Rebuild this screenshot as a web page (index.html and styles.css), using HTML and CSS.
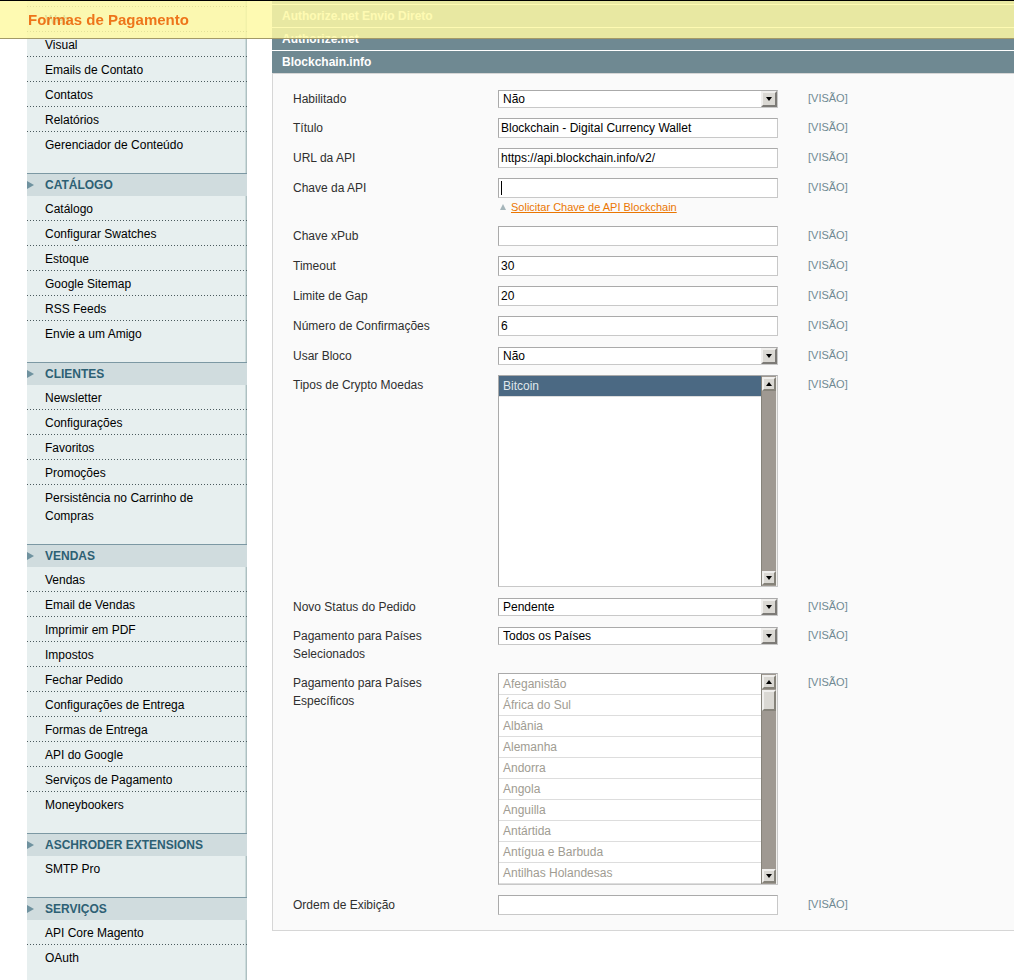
FILE: index.html
```
<!DOCTYPE html>
<html lang="pt-BR">
<head>
    <meta charset="UTF-8">
    <meta name="viewport" content="width=device-width, initial-scale=1.0">
    <title>Formas de Pagamento</title>
    <link rel="stylesheet" href="styles.css">
</head>
<body>

    <header class="floating-header">
        <h1>Formas de Pagamento</h1>
    </header>

    <div class="columns">
        <nav class="side-nav">
            <ul>
                <li><a href="#">Web</a></li>
                <li><a href="#">Visual</a></li>
                <li><a href="#">Emails de Contato</a></li>
                <li><a href="#">Contatos</a></li>
                <li><a href="#">Relatórios</a></li>
                <li><a href="#">Gerenciador de Conteúdo</a></li>
            </ul>
            <h2>Catálogo</h2>
            <ul>
                <li><a href="#">Catálogo</a></li>
                <li><a href="#">Configurar Swatches</a></li>
                <li><a href="#">Estoque</a></li>
                <li><a href="#">Google Sitemap</a></li>
                <li><a href="#">RSS Feeds</a></li>
                <li><a href="#">Envie a um Amigo</a></li>
            </ul>
            <h2>Clientes</h2>
            <ul>
                <li><a href="#">Newsletter</a></li>
                <li><a href="#">Configurações</a></li>
                <li><a href="#">Favoritos</a></li>
                <li><a href="#">Promoções</a></li>
                <li><a href="#">Persistência no Carrinho de Compras</a></li>
            </ul>
            <h2>Vendas</h2>
            <ul>
                <li><a href="#">Vendas</a></li>
                <li><a href="#">Email de Vendas</a></li>
                <li><a href="#">Imprimir em PDF</a></li>
                <li><a href="#">Impostos</a></li>
                <li><a href="#">Fechar Pedido</a></li>
                <li><a href="#">Configurações de Entrega</a></li>
                <li><a href="#">Formas de Entrega</a></li>
                <li><a href="#">API do Google</a></li>
                <li><a href="#">Serviços de Pagamento</a></li>
                <li><a href="#">Moneybookers</a></li>
            </ul>
            <h2>Aschroder Extensions</h2>
            <ul>
                <li><a href="#">SMTP Pro</a></li>
            </ul>
            <h2>Serviços</h2>
            <ul>
                <li><a href="#">API Core Magento</a></li>
                <li><a href="#">OAuth</a></li>
            </ul>
        </nav>

        <main class="main-col">
            <a class="section-head" href="#">Authorize.net Envio Direto</a>
            <a class="section-head" href="#">Authorize.net</a>
            <a class="section-head" href="#">Blockchain.info</a>

            <form class="fieldset">
                <div class="row">
                    <label for="active">Habilitado</label>
                    <div class="value select-box">
                        <select id="active"><option>Não</option><option>Sim</option></select>
                        <span class="drop"><i class="down"></i></span>
                    </div>
                    <span class="scope">[VISÃO]</span>
                </div>
                <div class="row">
                    <label for="title">Título</label>
                    <div class="value"><input type="text" id="title" value="Blockchain - Digital Currency Wallet"></div>
                    <span class="scope">[VISÃO]</span>
                </div>
                <div class="row">
                    <label for="api_url">URL da API</label>
                    <div class="value"><input type="text" id="api_url" value="https://api.blockchain.info/v2/"></div>
                    <span class="scope">[VISÃO]</span>
                </div>
                <div class="row">
                    <label for="api_key">Chave da API</label>
                    <div class="value">
                        <input type="text" id="api_key">
                        <span class="cursor"></span>
                        <p class="note"><i class="up"></i><a href="#">Solicitar Chave de API Blockchain</a></p>
                    </div>
                    <span class="scope">[VISÃO]</span>
                </div>
                <div class="row">
                    <label for="xpub">Chave xPub</label>
                    <div class="value"><input type="text" id="xpub"></div>
                    <span class="scope">[VISÃO]</span>
                </div>
                <div class="row">
                    <label for="timeout">Timeout</label>
                    <div class="value"><input type="text" id="timeout" value="30"></div>
                    <span class="scope">[VISÃO]</span>
                </div>
                <div class="row">
                    <label for="gap">Limite de Gap</label>
                    <div class="value"><input type="text" id="gap" value="20"></div>
                    <span class="scope">[VISÃO]</span>
                </div>
                <div class="row">
                    <label for="confirmations">Número de Confirmações</label>
                    <div class="value"><input type="text" id="confirmations" value="6"></div>
                    <span class="scope">[VISÃO]</span>
                </div>
                <div class="row">
                    <label for="block">Usar Bloco</label>
                    <div class="value select-box">
                        <select id="block"><option>Não</option><option>Sim</option></select>
                        <span class="drop"><i class="down"></i></span>
                    </div>
                    <span class="scope">[VISÃO]</span>
                </div>
                <div class="row">
                    <label for="types">Tipos de Crypto Moedas</label>
                    <div class="value">
                        <div class="list-box">
                            <select id="types" multiple size="10"><option selected>Bitcoin</option></select>
                            <div class="scrollbar">
                                <span class="arrow"><i class="up"></i></span>
                                <span class="arrow"><i class="down"></i></span>
                            </div>
                        </div>
                    </div>
                    <span class="scope">[VISÃO]</span>
                </div>
                <div class="row">
                    <label for="status">Novo Status do Pedido</label>
                    <div class="value select-box">
                        <select id="status"><option>Pendente</option></select>
                        <span class="drop"><i class="down"></i></span>
                    </div>
                    <span class="scope">[VISÃO]</span>
                </div>
                <div class="row">
                    <label for="allow">Pagamento para Países Selecionados</label>
                    <div class="value select-box">
                        <select id="allow"><option>Todos os Países</option><option>Países Específicos</option></select>
                        <span class="drop"><i class="down"></i></span>
                    </div>
                    <span class="scope">[VISÃO]</span>
                </div>
                <div class="row">
                    <label for="countries">Pagamento para Países Específicos</label>
                    <div class="value">
                        <div class="list-box">
                            <select id="countries" multiple size="10" disabled>
                                <option>Afeganistão</option>
                                <option>África do Sul</option>
                                <option>Albânia</option>
                                <option>Alemanha</option>
                                <option>Andorra</option>
                                <option>Angola</option>
                                <option>Anguilla</option>
                                <option>Antártida</option>
                                <option>Antígua e Barbuda</option>
                                <option>Antilhas Holandesas</option>
                            </select>
                            <div class="scrollbar">
                                <span class="arrow"><i class="up"></i></span>
                                <span class="thumb"></span>
                                <span class="arrow"><i class="down"></i></span>
                            </div>
                        </div>
                    </div>
                    <span class="scope">[VISÃO]</span>
                </div>
                <div class="row">
                    <label for="sort">Ordem de Exibição</label>
                    <div class="value"><input type="text" id="sort"></div>
                    <span class="scope">[VISÃO]</span>
                </div>
            </form>
        </main>
    </div>

</body>
</html>
```
FILE: styles.css
```
* {
    box-sizing: border-box;
}

body {
    margin: 0;
    background: #fff;
    color: #2f2f2f;
    font-family: "Liberation Sans", Arial, Helvetica, sans-serif;
    font-size: 12px;
    line-height: 18px;
}

/* Floating title bar */
.floating-header {
    position: fixed;
    top: 0;
    left: 0;
    right: 0;
    z-index: 10;
    padding: 10px 28px 9px;
    border-top: 1px solid #000;
    border-bottom: 1px solid #a39a68;
    background: rgba(254, 249, 164, 0.85);
}

.floating-header h1 {
    margin: 0;
    color: #eb5e00;
    font-size: 15px;
    line-height: 18px;
    opacity: 0.85;
}

.columns {
    display: flex;
    min-height: 100vh;
    padding-left: 27px;
    gap: 25px;
}

/* Left menu */
.side-nav {
    flex: 0 0 220px;
    padding-top: 6px;
    background: linear-gradient(to left, #aebfc1 1px, #cbdbdb 1px, #cbdbdb 2px, #e7efef 2px);
}

.side-nav ul {
    margin: 0;
    padding: 0 0 17px;
    list-style: none;
}

.side-nav ul:first-child {
    padding-top: 1px;
    background: repeating-linear-gradient(to right, #4b5a5e 0 1px, transparent 1px 3px) top / 100% 1px no-repeat;
}

.side-nav li {
    padding-bottom: 1px;
    background: repeating-linear-gradient(to right, #4b5a5e 0 1px, transparent 1px 3px) bottom / 100% 1px no-repeat;
}

.side-nav li:last-child {
    padding-bottom: 0;
    background: none;
}

.side-nav li a {
    display: block;
    padding: 4px 32px 2px 18px;
    color: #000;
    text-decoration: none;
}

.side-nav h2 {
    display: flex;
    align-items: center;
    gap: 11px;
    margin: 0;
    padding: 2px 0;
    border-top: 1px solid #7c98a3;
    background: #d0dcde;
    color: #2d6074;
    font-size: 12px;
    line-height: 18px;
    text-transform: uppercase;
}

.side-nav h2::before {
    content: "";
    border-left: 7px solid #6f929f;
    border-top: 4px solid transparent;
    border-bottom: 4px solid transparent;
}

/* Payment sections */
.main-col {
    flex: 1;
    min-width: 0;
    padding-top: 4px;
    background: linear-gradient(#6f8992 4px, transparent 4px);
}

.section-head {
    display: block;
    padding: 2px 10px;
    border-top: 1px solid #fff;
    background: #6f8992;
    color: #fff;
    font-weight: bold;
    text-decoration: none;
}

.fieldset {
    padding: 10px 0 10px 20px;
    border: 1px solid #d6d6d6;
    border-right: 0;
    background: #fafafa;
}

.row {
    display: grid;
    grid-template-columns: 175px 280px 1fr;
    column-gap: 30px;
    align-items: start;
}

.row label {
    padding: 6px 0 5px;
}

.value {
    position: relative;
    padding: 5px 0;
}

.scope {
    padding-top: 5px;
    color: #6f8992;
    font-size: 11px;
}

input,
select {
    display: block;
    width: 100%;
    margin: 0;
    border: 1px solid #aaa;
    border-right-color: #c8c8c8;
    border-bottom-color: #c8c8c8;
    border-radius: 0;
    background: #fff;
    color: #000;
    font: inherit;
}

input {
    height: 20px;
    padding: 0 2px;
}

.select-box {
    padding-top: 6px;
}

.select-box select {
    height: 18px;
    padding: 0 20px 0 4px;
    line-height: 16px;
    appearance: none;
}

.drop {
    position: absolute;
    top: 7px;
    right: 1px;
    display: flex;
    align-items: center;
    justify-content: center;
    width: 16px;
    height: 16px;
    border: 2px solid;
    border-color: #f0efed #7c7a76 #7c7a76 #f0efed;
    background: #dad8d3;
    pointer-events: none;
}

.down {
    border: 3px solid transparent;
    border-top: 4px solid #000;
    border-bottom: 0;
}

.up {
    border: 3px solid transparent;
    border-bottom: 4px solid #000;
    border-top: 0;
}

.cursor {
    position: absolute;
    top: 8px;
    left: 3px;
    width: 1px;
    height: 14px;
    background: #000;
}

.note {
    display: flex;
    align-items: center;
    gap: 5px;
    margin: 0;
    padding-left: 2px;
    font-size: 11px;
}

.note a {
    color: #ea7601;
}

.note .up {
    border-bottom: 6px solid #a5b5ba;
}

/* Multiple choice lists */
.list-box {
    display: flex;
    height: 212px;
    border: 1px solid #aaa;
    border-right-color: #c8c8c8;
    border-bottom-color: #c8c8c8;
    background: #fff;
}

.list-box select {
    flex: 1;
    min-width: 0;
    height: 210px;
    padding: 0;
    border: 0;
    overflow: hidden;
    scrollbar-width: none;
}

.list-box option {
    height: 21px;
    min-height: 21px;
    padding: 3px 4px 0;
    border-bottom: 1px solid #ddd;
}

.list-box option:checked {
    background: linear-gradient(#4b6983, #4b6983);
    -webkit-text-fill-color: #dfe6ec;
}

.list-box select:disabled {
    opacity: 1;
}

.list-box select:disabled option {
    color: #a09c92;
    -webkit-text-fill-color: #a09c92;
}

.scrollbar {
    display: flex;
    flex-direction: column;
    width: 16px;
    padding: 1px 0;
    border-left: 1px solid #86837a;
    border-right: 1px solid #f0efed;
    background: #9f9992;
}

.arrow,
.thumb {
    display: flex;
    align-items: center;
    justify-content: center;
    height: 14px;
    border: 2px solid;
    border-color: #f0efed #86837a #86837a #f0efed;
    background: #dad8d3;
}

.arrow:last-child {
    margin-top: auto;
}

.thumb {
    height: 21px;
    margin-top: 1px;
}
```
